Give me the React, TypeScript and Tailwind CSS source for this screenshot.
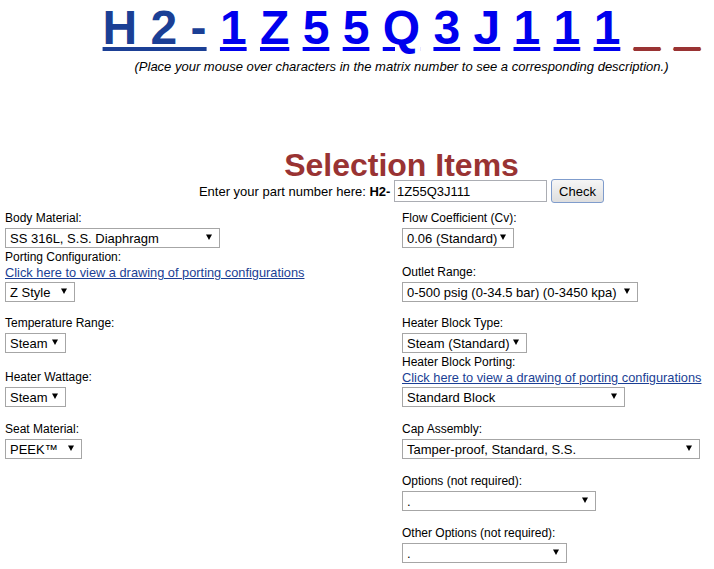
import React from 'react';

type Field = {
  label: string;
  value: string;
  w: string;
  link?: boolean;
};

type Row = {
  h: string;
  left?: Field;
  right?: Field;
};

const rows: Row[] = [
  {
    h: 'h-[45px]',
    left: { label: 'Body Material:', value: 'SS 316L, S.S. Diaphragm', w: 'w-[215px]' },
    right: { label: 'Flow Coefficient (Cv):', value: '0.06 (Standard)', w: 'w-[112px]' },
  },
  {
    h: 'h-[54px]',
    left: { label: 'Porting Configuration:', value: 'Z Style', w: 'w-[70px]', link: true },
    right: { label: 'Outlet Range:', value: '0-500 psig (0-34.5 bar) (0-3450 kpa)', w: 'w-[236px]' },
  },
  {
    h: 'h-[51px]',
    left: { label: 'Temperature Range:', value: 'Steam', w: 'w-[61px]' },
    right: { label: 'Heater Block Type:', value: 'Steam (Standard)', w: 'w-[125px]' },
  },
  {
    h: 'h-[54px]',
    left: { label: 'Heater Wattage:', value: 'Steam', w: 'w-[61px]' },
    right: { label: 'Heater Block Porting:', value: 'Standard Block', w: 'w-[223px]', link: true },
  },
  {
    h: 'h-[52px]',
    left: { label: 'Seat Material:', value: 'PEEK™', w: 'w-[77px]' },
    right: { label: 'Cap Assembly:', value: 'Tamper-proof, Standard, S.S.', w: 'w-[298px]' },
  },
  {
    h: 'h-[52px]',
    right: { label: 'Options (not required):', value: '.', w: 'w-[194px]' },
  },
  {
    h: 'h-[52px]',
    right: { label: 'Other Options (not required):', value: '.', w: 'w-[165px]' },
  },
];

const matrix = ['1', 'Z', '5', '5', 'Q', '3', 'J', '1', '1', '1'];

function FakeSelect({ value, w }: { value: string; w: string }) {
  return (
    <div
      className={`${w} h-[20px] mt-[2px] flex items-center justify-between border border-[#a6a6a6] bg-white pl-[4px] pr-[7px] text-[13px] leading-[15px]`}
    >
      <span className="whitespace-nowrap">{value}</span>
      <svg width="6" height="6" viewBox="0 0 6 6" className="mb-[2px] ml-[3px] shrink-0">
        <polygon points="0,0.5 6,0.5 3,6" fill="#000" />
      </svg>
    </div>
  );
}

function Cell({ field }: { field?: Field }) {
  if (!field) return <div />;
  return (
    <div className="flex flex-col items-start">
      <div className="text-[12px] leading-[15px] whitespace-nowrap">{field.label}</div>
      {field.link && (
        <a className="text-[12.8px] leading-[15px] text-[#1b3f95] underline whitespace-nowrap cursor-pointer">
          Click here to view a drawing of porting configurations
        </a>
      )}
      <FakeSelect value={field.value} w={field.w} />
    </div>
  );
}

export default function App() {
  return (
    <div className="w-full overflow-hidden bg-white text-black font-['Liberation_Sans',Arial,sans-serif]">
      <div className="w-[803px]">
        <div className="text-center text-[48px] leading-[55px] font-bold whitespace-nowrap">
          <a className="text-[#1b3f95] underline cursor-pointer">H 2 -</a>{' '}
          {matrix.map((c, i) => (
            <React.Fragment key={i}>
              <a className="text-[#0000ee] underline cursor-pointer">{c}</a>{' '}
            </React.Fragment>
          ))}
          <span className="text-[#993333] underline">_</span>{' '}
          <span className="text-[#993333] underline">_</span>
        </div>
        <p className="mt-[4px] text-center italic text-[13px] leading-[15px]">
          (Place your mouse over characters in the matrix number to see a corresponding description.)
        </p>

        <h2 className="mt-[78px] text-center text-[32px] leading-[27px] font-bold text-[#993333]">
          Selection Items
        </h2>

        <div className="h-[24px] flex items-center justify-center text-[13px] leading-[15px]">
          <span>Enter your part number here:&nbsp;</span>
          <b>H2-</b>
          <span>&nbsp;</span>
          <input
            readOnly
            value="1Z55Q3J111"
            className="w-[153px] h-[22px] border border-[#abadb3] bg-white pl-[2px] text-[13px] outline-none"
          />
          <button className="ml-[4px] w-[53px] h-[24px] rounded-[3px] border border-[#7f9ccc] bg-gradient-to-b from-[#f6f6f6] to-[#dedede] text-[13px] leading-[15px]">
            Check
          </button>
        </div>

        <div className="pl-[5px]">
          {rows.map((r, i) => (
            <div key={i} className={`${r.h} grid grid-cols-[397px_397px] items-end`}>
              <Cell field={r.left} />
              <Cell field={r.right} />
            </div>
          ))}
        </div>
      </div>
    </div>
  );
}
